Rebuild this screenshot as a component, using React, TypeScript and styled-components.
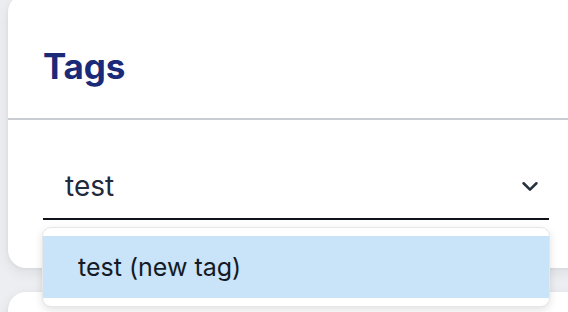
import React, { useState } from "react";
import styled, { createGlobalStyle } from "styled-components";

const Color = {
  page: "#eceef1",
  white: "#ffffff",
  navy: "#1b2a78",
  text: "#222a3b",
  optionText: "#141a26",
  divider: "#c9cdd2",
  underline: "#10131a",
  highlight: "#c9e3f8",
  menuBorder: "#e6e7e9",
};

const GlobalStyle = createGlobalStyle`
  html, body {
    margin: 0;
    padding: 0;
    overflow: hidden;
    background: ${Color.page};
    font-family: Inter, "Noto Sans", "Liberation Sans", sans-serif;
  }
`;

const Page = styled.div`
  display: flex;
  flex-direction: column;
  gap: 24px;
  padding-left: 8px;
  width: 576px;
`;

const Card = styled.section<{ $offset?: number }>`
  background: ${Color.white};
  border-radius: 18px;
  margin-top: ${({ $offset }) => ($offset ? `${$offset}px` : "0")};
  box-shadow: 0 4px 14px rgba(20, 30, 50, 0.08), 0 1px 3px rgba(20, 30, 50, 0.06);
`;

const Header = styled.header`
  height: 126px;
  display: flex;
  align-items: flex-end;
  padding: 0 35px 32px;
  box-sizing: border-box;
  border-bottom: 2px solid ${Color.divider};
`;

const Title = styled.h2`
  margin: 0;
  font-size: 35px;
  font-weight: 700;
  line-height: 40px;
  color: ${Color.navy};
  letter-spacing: -0.2px;
`;

const Body = styled.div`
  padding: 34px 35px 48px;
`;

const Field = styled.div`
  position: relative;
`;

const Input = styled.div`
  height: 66px;
  box-sizing: border-box;
  display: flex;
  align-items: center;
  justify-content: space-between;
  padding: 0 8px 0 22px;
  border-bottom: 2px solid ${Color.underline};
  font-size: 28px;
  color: ${Color.text};
`;

const Chevron = styled.svg`
  width: 22px;
  height: 22px;
  color: #27303f;
`;

const Menu = styled.ul`
  position: absolute;
  left: -1px;
  right: -1px;
  top: calc(100% + 7px);
  margin: 0;
  padding: 8px 0 8px;
  list-style: none;
  background: ${Color.white};
  border: 1px solid ${Color.menuBorder};
  border-radius: 9px;
  box-shadow: 0 3px 8px rgba(0, 0, 0, 0.12);
  z-index: 2;
`;

const Option = styled.li<{ $active?: boolean }>`
  height: 62px;
  display: flex;
  align-items: center;
  padding-left: 35px;
  font-size: 25px;
  color: ${Color.optionText};
  background: ${({ $active }) => ($active ? Color.highlight : "transparent")};
`;

const Spacer = styled.div`
  height: 120px;
`;

export default function App() {
  const [value] = useState("test");
  return (
    <>
      <GlobalStyle />
      <Page>
        <Card $offset={-6}>
          <Header>
            <Title>Tags</Title>
          </Header>
          <Body>
            <Field>
              <Input>
                <span>{value}</span>
                <Chevron viewBox="0 0 24 24" fill="none" stroke="currentColor" strokeWidth="2.8" strokeLinecap="round" strokeLinejoin="round">
                  <path d="M5 9l7 7 7-7" />
                </Chevron>
              </Input>
              <Menu>
                <Option $active>{value} (new tag)</Option>
              </Menu>
            </Field>
          </Body>
        </Card>
        <Card>
          <Spacer />
        </Card>
      </Page>
    </>
  );
}
